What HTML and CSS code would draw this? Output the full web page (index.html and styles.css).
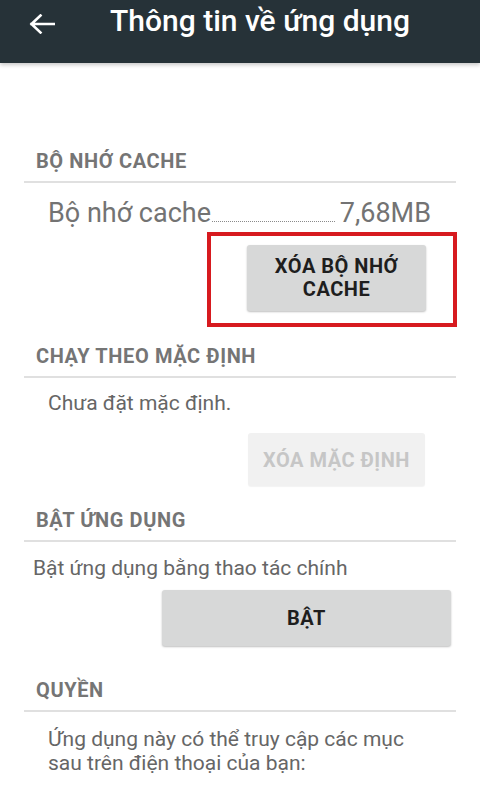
FILE: index.html
```html
<!DOCTYPE html>
<html lang="vi">
<head>
<meta charset="utf-8">
<title>Thông tin về ứng dụng</title>
<link rel="stylesheet" href="styles.css">
</head>
<body>
<header class="appbar">
  <svg class="back" viewBox="0 0 26 20" width="26" height="20" aria-hidden="true">
    <path d="M25 10H2.5M11.5 1.5L2.5 10l9 8.5" fill="none" stroke="#fff" stroke-width="2.6" stroke-linecap="square"/>
  </svg>
  <h1 class="title">Thông tin về ứng dụng</h1>
</header>
<main class="content">
  <section class="sec sec-cache">
    <h2 class="sec-title">BỘ NHỚ CACHE</h2>
    <div class="divider"></div>
    <div class="stat-row">
      <span class="stat-label">Bộ nhớ cache</span>
      <span class="leader"></span>
      <span class="stat-value">7,68MB</span>
    </div>
    <div class="highlight">
      <button class="btn btn-cache">XÓA BỘ NHỚ<br>CACHE</button>
    </div>
  </section>
  <section class="sec sec-default">
    <h2 class="sec-title">CHẠY THEO MẶC ĐỊNH</h2>
    <div class="divider"></div>
    <p class="text text-default">Chưa đặt mặc định.</p>
    <div class="btn-row">
      <button class="btn btn-disabled">XÓA MẶC ĐỊNH</button>
    </div>
  </section>
  <section class="sec sec-launch">
    <h2 class="sec-title">BẬT ỨNG DỤNG</h2>
    <div class="divider"></div>
    <p class="text text-launch">Bật ứng dụng bằng thao tác chính</p>
    <div class="btn-row">
      <button class="btn btn-launch">BẬT</button>
    </div>
  </section>
  <section class="sec sec-perm">
    <h2 class="sec-title">QUYỀN</h2>
    <div class="divider"></div>
    <p class="text text-perm">Ứng dụng này có thể truy cập các mục<br>sau trên điện thoại của bạn:</p>
  </section>
</main>
</body>
</html>
```
FILE: styles.css
```css
* { box-sizing: border-box; }
html, body { margin: 0; padding: 0; }
body {
  width: 480px;
  height: 795px;
  overflow: hidden;
  background: #fff;
  font-family: Roboto, "Noto Sans", "Liberation Sans", sans-serif;
}
.appbar {
  height: 63px;
  background: #263238;
  display: flex;
  align-items: flex-start;
  padding: 0 0 0 29px;
  box-shadow: 0 2px 4px rgba(0,0,0,0.22);
  position: relative;
  z-index: 1;
}
.back { display: block; margin-top: 14px; }
.title {
  margin: 3px 0 0 55px;
  color: #fff;
  font-size: 30px;
  font-weight: 500;
  line-height: 36px;
}
.content {
  padding: 86px 24px 0;
}
.sec-title {
  margin: 0;
  padding-left: 12px;
  font-size: 20px;
  line-height: 24px;
  font-weight: 700;
  letter-spacing: 0.6px;
  color: #757575;
}
.divider {
  height: 2px;
  background: #e0e0e0;
  margin-top: 8px;
}
.stat-row {
  display: flex;
  align-items: baseline;
  margin-top: 15px;
  padding: 0 25px 0 24px;
  font-size: 27px;
  line-height: 30px;
  color: #737373;
}
.leader {
  flex: 1;
  height: 0;
  border-bottom: 1px dotted #8a8a8a;
  margin: 0 5px 0 1px;
}
.highlight {
  width: 250px;
  height: 95px;
  margin: 4px -1px 0 auto;
  border: 4px solid #d71a1f;
  padding: 9px 0 0 36px;
}
.btn {
  display: flex;
  align-items: center;
  justify-content: center;
  border: 0;
  border-radius: 3px;
  font-family: inherit;
  font-weight: 700;
  letter-spacing: 0.5px;
  padding: 0;
}
.btn-cache {
  width: 179px;
  height: 66px;
  background: #d7d8d8;
  color: #1e1e1e;
  font-size: 20px;
  line-height: 23px;
  box-shadow: 0 1px 2px rgba(0,0,0,0.25);
}
.sec-default { margin-top: 17px; }
.text {
  margin: 0;
  font-size: 21px;
  line-height: 24px;
  color: #666;
}
.text-default { margin-top: 13px; padding-left: 24px; }
.btn-row { display: flex; justify-content: flex-end; }
.btn-disabled {
  width: 177px;
  height: 53px;
  margin: 18px 31px 0 0;
  background: #f1f1f1;
  color: #c6c6c6;
  font-size: 20px;
  box-shadow: 0 1px 1px rgba(0,0,0,0.05);
}
.sec-launch { margin-top: 22px; }
.text-launch { margin-top: 14px; padding-left: 9px; }
.btn-launch {
  width: 289px;
  height: 56px;
  margin: 10px 5px 0 0;
  background: #d7d8d8;
  color: #1e1e1e;
  font-size: 20px;
  box-shadow: 0 1px 2px rgba(0,0,0,0.25);
}
.sec-perm { margin-top: 32px; }
.text-perm { margin-top: 15px; padding-left: 24px; }
```
